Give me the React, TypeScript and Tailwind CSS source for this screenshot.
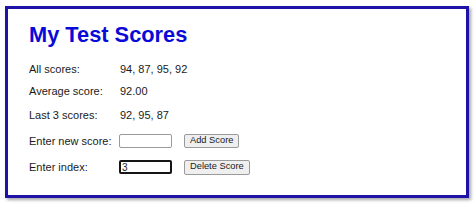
import React, { useState } from 'react';

export default function App() {
  const [scores] = useState([94, 87, 95, 92]);
  const [newScore, setNewScore] = useState('');
  const [index, setIndex] = useState('3');

  const avg = (scores.reduce((a, b) => a + b, 0) / scores.length).toFixed(2);
  const last3 = scores.slice(-3).reverse().join(', ');

  return (
    <div className="w-[474px] h-[204px] bg-white pt-[6px] pl-[5px] font-['Liberation_Sans',Arial,sans-serif] text-[#1a1a1a]">
      <div className="w-[464px] h-[192px] border-[3px] border-[#1e13a6] shadow-[2px_2px_3px_rgba(0,0,0,0.35)] bg-white pt-[14px] pl-[21px]">
        <h1 className="text-[21.8px] leading-[24px] font-bold text-[#0a0ad8]">My Test Scores</h1>

        <div className="mt-[15px] flex h-[14px] items-center text-[11px]">
          <span className="w-[91px]">All scores:</span>
          <span>{scores.join(', ')}</span>
        </div>
        <div className="mt-[8px] flex h-[14px] items-center text-[11px]">
          <span className="w-[91px]">Average score:</span>
          <span>{avg}</span>
        </div>
        <div className="mt-[10px] flex h-[14px] items-center text-[11px]">
          <span className="w-[91px]">Last 3 scores:</span>
          <span>{last3}</span>
        </div>

        {/* inputs */}
        <div className="mt-[12px] flex h-[14px] items-center text-[11px]">
          <span className="w-[90px]">Enter new score:</span>
          <input
            type="text"
            value={newScore}
            onChange={(e) => setNewScore(e.target.value)}
            className="w-[53px] h-[14px] border border-[#9a9a9a] rounded-[2px] bg-white text-[10px] px-[1px] outline-none"
          />
          <button className="ml-[12px] h-[14px] px-[5px] bg-[#efefef] border border-[#9a9a9a] rounded-[2px] text-[9.3px] leading-none text-[#1a1a1a]">
            Add Score
          </button>
        </div>
        <div className="mt-[12px] flex h-[14px] items-center text-[11px]">
          <span className="w-[90px]">Enter index:</span>
          <input
            type="text"
            value={index}
            onChange={(e) => setIndex(e.target.value)}
            className="w-[53px] h-[14px] border-2 border-[#151515] rounded-[2px] bg-white text-[10px] leading-none px-[1px] outline-none"
          />
          <button className="ml-[12px] h-[15px] px-[5px] bg-[#efefef] border border-[#9a9a9a] rounded-[2px] text-[9.3px] leading-none text-[#1a1a1a]">
            Delete Score
          </button>
        </div>
      </div>
    </div>
  );
}
